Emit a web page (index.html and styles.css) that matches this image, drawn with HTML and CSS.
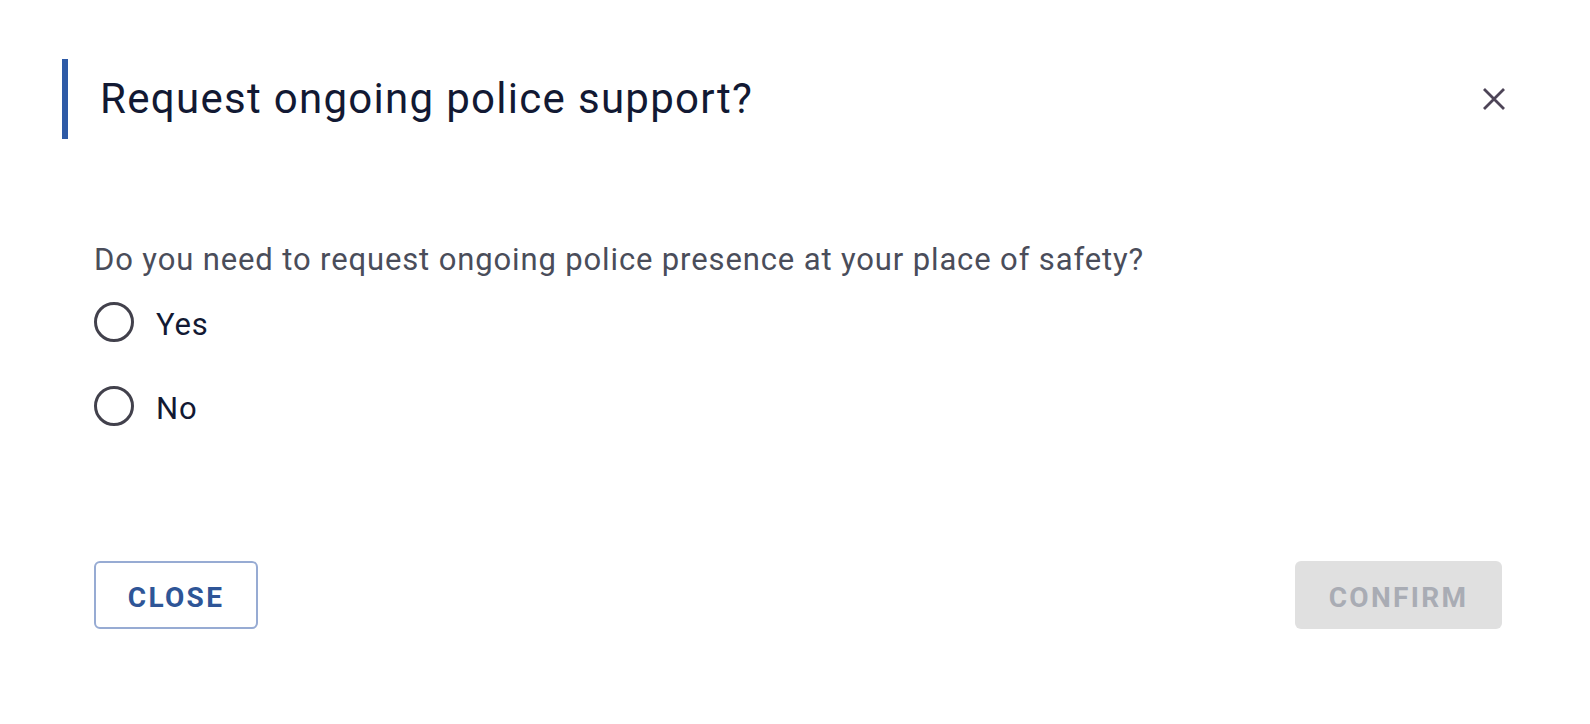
FILE: index.html
```html
<!DOCTYPE html>
<html lang="en">
<head>
<meta charset="utf-8">
<title>Request ongoing police support?</title>
<link rel="stylesheet" href="styles.css">
</head>
<body>
<div class="dialog">
  <div class="header">
    <h1 class="title">Request ongoing police support?</h1>
    <button class="close-x" aria-label="Close">
      <svg width="22" height="24" viewBox="0 0 22 24"><path d="M1 2 L21 22 M21 2 L1 22" stroke="#4d4457" stroke-width="2.8" fill="none"/></svg>
    </button>
  </div>
  <div class="content">
    <p class="question">Do you need to request ongoing police presence at your place of safety?</p>
    <label class="option"><span class="radio"></span><span class="label">Yes</span></label>
    <label class="option"><span class="radio"></span><span class="label">No</span></label>
  </div>
  <div class="actions">
    <button class="btn btn-outline">CLOSE</button>
    <button class="btn btn-disabled">CONFIRM</button>
  </div>
</div>
</body>
</html>
```
FILE: styles.css
```css
html, body {
  margin: 0;
  padding: 0;
  background: #ffffff;
}
body {
  font-family: Roboto, "Liberation Sans", sans-serif;
}
.dialog {
  padding: 59px 56px 0 62px;
}
.header {
  display: flex;
  align-items: center;
  justify-content: space-between;
  height: 80px;
  border-left: 6px solid #2e5aa6;
  padding-left: 32px;
}
.title {
  margin: 0;
  font-size: 42px;
  font-weight: 400;
  color: #121933;
  letter-spacing: 1.3px;
  line-height: 50px;
}
.close-x {
  border: 0;
  background: none;
  padding: 0;
  width: 22px;
  height: 24px;
  margin-right: 29px;
  display: flex;
}
.content {
  padding: 101px 0 0 32px;
}
.question {
  margin: 0 0 22px 0;
  font-size: 31px;
  color: #4a4d5a;
  line-height: 40px;
  letter-spacing: 0.87px;
}
.option {
  display: flex;
  align-items: center;
  gap: 22px;
  height: 40px;
  margin-bottom: 44px;
}
.option:last-child {
  margin-bottom: 0;
}
.radio {
  box-sizing: border-box;
  width: 40px;
  height: 40px;
  border: 3px solid #42414c;
  border-radius: 50%;
}
.label {
  font-size: 31px;
  line-height: 40px;
  padding-top: 5px;
  color: #121933;
  letter-spacing: 0.87px;
}
.actions {
  display: flex;
  justify-content: space-between;
  padding: 135px 32px 0 32px;
}
.btn {
  box-sizing: border-box;
  height: 68px;
  border-radius: 6px;
  font-family: Roboto, "Liberation Sans", sans-serif;
  font-size: 28px;
  font-weight: 700;
  letter-spacing: 2.3px;
  padding: 4px 0 0 0;
}
.btn-outline {
  width: 164px;
  background: #ffffff;
  border: 2px solid #97abd3;
  color: #2e5597;
}
.btn-disabled {
  width: 207px;
  background: #e0e0e0;
  border: 0;
  color: #a9acb4;
}
```
